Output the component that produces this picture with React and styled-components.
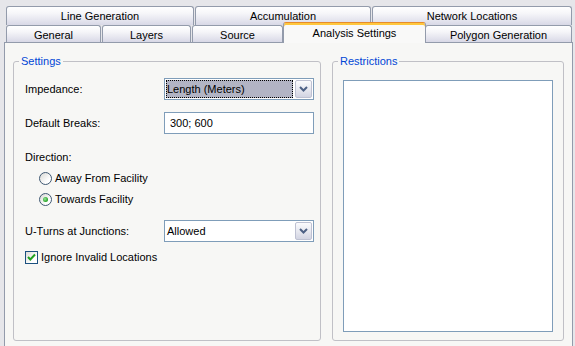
import React from 'react';
import styled, { createGlobalStyle, css } from 'styled-components';

const Global = createGlobalStyle`
  html, body { margin: 0; padding: 0; overflow: hidden; background: #e6e6ea; }
  body { font-family: "Liberation Sans", Arial, sans-serif; font-size: 11px; color: #000; }
  * { box-sizing: border-box; }
`;

const Window = styled.div`
  width: 575px;
  height: 346px;
  padding: 6px 3px 0 4px;
  display: flex;
  flex-direction: column;
  overflow: hidden;
  background: #e6e6ea;
`;

const TabRow = styled.div`
  display: flex;
  gap: 1px;
  padding-left: 2px;
  height: ${(p) => p.$h}px;
  flex-shrink: 0;
`;

const Tab = styled.div`
  width: ${(p) => p.$w}px;
  height: 100%;
  display: flex;
  align-items: center;
  justify-content: center;
  padding-top: ${(p) => p.$pt || 0}px;
  border: 1px solid #939bab;
  border-bottom: none;
  border-radius: 3px 3px 0 0;
  background: linear-gradient(#ffffff 0%, #f6f6f9 35%, #e4e4ee 75%, #d8d8e6 100%);
  white-space: nowrap;
  flex-shrink: 0;
  ${(p) =>
    p.$selected &&
    css`
      position: relative;
      z-index: 2;
      height: 21px;
      margin: -3px -2px 0 -1px;
      padding-top: 0;
      padding-bottom: 1px;
      border-top: 1px solid #e68b2c;
      box-shadow: inset 0 2px 0 #ffc73c;
      background: #f9f9f8;
    `}
`;

const Page = styled.div`
  width: 569px;
  height: 320px;
  flex-shrink: 0;
  border: 1px solid #939bab;
  background: #f7f7f5;
  display: flex;
  gap: 11px;
  padding: 12px 0 0 8px;
`;

const Group = styled.fieldset`
  width: ${(p) => p.$w}px;
  height: 286px;
  margin: 0;
  padding: 0;
  border: 1px solid #c0c0c6;
  border-radius: 3px;
  display: flex;
  flex-direction: column;
  min-width: 0;
`;

const Legend = styled.legend`
  margin-left: 5px;
  padding: 0 2px;
  color: #0046d5;
  line-height: 13px;
  font-size: 11px;
`;

const Form = styled.div`
  display: flex;
  flex-direction: column;
  padding: 10px 6px 0 11px;
`;

const FieldRow = styled.div`
  display: flex;
  align-items: center;
  justify-content: space-between;
  height: 22px;
  margin-top: ${(p) => p.$mt || 0}px;
`;

const Label = styled.div`
  line-height: 13px;
  margin-top: ${(p) => p.$mt || 0}px;
`;

const Combo = styled.div`
  width: 150px;
  height: 22px;
  border: 1px solid #7f9db9;
  background: #fff;
  padding: 1px;
  display: flex;
  gap: 2px;
`;

const ComboValue = styled.div`
  flex: 1;
  display: flex;
  align-items: center;
  padding-left: 1px;
  ${(p) =>
    p.$focused &&
    css`
      background: #b2b4c4;
      outline: 1px dotted #000;
      outline-offset: -1px;
    `}
`;

const ComboButton = styled.div`
  width: 17px;
  border: 1px solid #bec1d2;
  border-radius: 2px;
  background: linear-gradient(#fbfbfd, #e6e7ef 55%, #d2d4e2);
  display: flex;
  align-items: center;
  justify-content: center;
`;

const TextBox = styled.div`
  width: 150px;
  height: 22px;
  border: 1px solid #7f9db9;
  background: #fff;
  padding-left: 5px;
  display: flex;
  align-items: center;
`;

const OptionRow = styled.div`
  display: flex;
  align-items: center;
  gap: ${(p) => p.$gap}px;
  height: 13px;
  margin-top: ${(p) => p.$mt || 0}px;
  margin-left: ${(p) => p.$ml || 0}px;
  line-height: 13px;
`;

const Radio = styled.span`
  width: 13px;
  height: 13px;
  border-radius: 50%;
  border: 1px solid #3f5872;
  background: linear-gradient(135deg, #d8d8d4, #ffffff 70%);
  display: flex;
  align-items: center;
  justify-content: center;
  flex-shrink: 0;
  &::after {
    content: '';
    display: ${(p) => (p.$checked ? 'block' : 'none')};
    width: 5px;
    height: 5px;
    border-radius: 50%;
    background: radial-gradient(circle at 40% 40%, #9be69b, #21a121 70%);
  }
`;

const Check = styled.span`
  width: 13px;
  height: 13px;
  border: 1px solid #1c5180;
  background: linear-gradient(135deg, #dcdcd7, #ffffff 70%);
  display: flex;
  align-items: center;
  justify-content: center;
  flex-shrink: 0;
`;

const ListBox = styled.div`
  margin: 12px 10px 0 10px;
  height: 252px;
  border: 1px solid #7f9db9;
  background: #fff;
`;

const Chevron = () => (
  <svg width="9" height="6" viewBox="0 0 9 6">
    <path d="M1 1 L4.5 4.5 L8 1" fill="none" stroke="#4d6185" strokeWidth="2" />
  </svg>
);

const CheckMark = () => (
  <svg width="11" height="11" viewBox="0 0 11 11">
    <path d="M2 5 L4.3 7.5 L9 2.5" fill="none" stroke="#21a121" strokeWidth="2" />
  </svg>
);

const ComboBox = ({ value, focused }) => (
  <Combo>
    <ComboValue $focused={focused}>{value}</ComboValue>
    <ComboButton>
      <Chevron />
    </ComboButton>
  </Combo>
);

export default function App() {
  return (
    <>
      <Global />
      <Window>
        <TabRow $h={19}>
          <Tab $w={188}>Line Generation</Tab>
          <Tab $w={176}>Accumulation</Tab>
          <Tab $w={200}>Network Locations</Tab>
        </TabRow>
        <TabRow $h={17}>
          <Tab $w={95} $pt={1}>General</Tab>
          <Tab $w={89} $pt={1}>Layers</Tab>
          <Tab $w={91} $pt={1}>Source</Tab>
          <Tab $w={143} $selected>Analysis Settings</Tab>
          <Tab $w={147} $pt={1}>Polygon Generation</Tab>
        </TabRow>
        <Page>
          <Group $w={308}>
            <Legend>Settings</Legend>
            <Form>
              <FieldRow>
                <Label>Impedance:</Label>
                <ComboBox value="Length (Meters)" focused />
              </FieldRow>
              <FieldRow $mt={12}>
                <Label>Default Breaks:</Label>
                <TextBox>300; 600</TextBox>
              </FieldRow>
              <Label $mt={17}>Direction:</Label>
              <OptionRow $mt={8} $ml={14} $gap={3}>
                <Radio />
                Away From Facility
              </OptionRow>
              <OptionRow $mt={8} $ml={14} $gap={3}>
                <Radio $checked />
                Towards Facility
              </OptionRow>
              <FieldRow $mt={14}>
                <Label>U-Turns at Junctions:</Label>
                <ComboBox value="Allowed" />
              </FieldRow>
              <OptionRow $mt={9} $gap={3}>
                <Check>
                  <CheckMark />
                </Check>
                Ignore Invalid Locations
              </OptionRow>
            </Form>
          </Group>
          <Group $w={232}>
            <Legend>Restrictions</Legend>
            <ListBox />
          </Group>
        </Page>
      </Window>
    </>
  );
}
